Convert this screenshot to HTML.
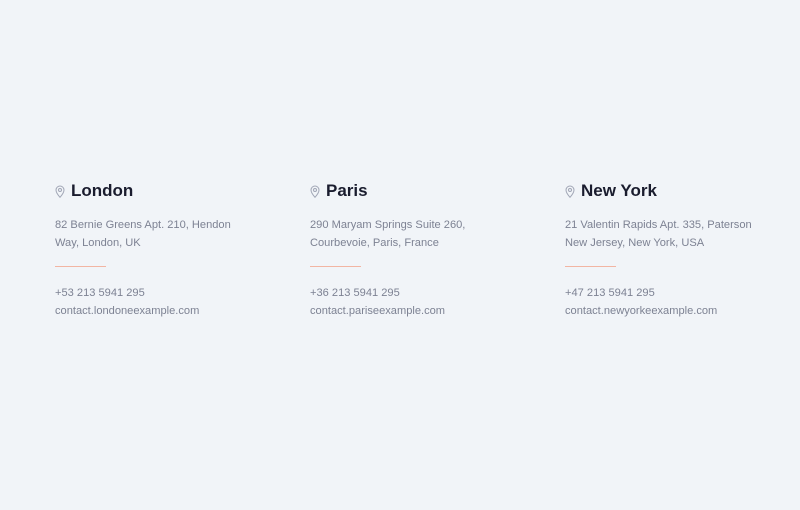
<!DOCTYPE html>
<html><head><style>
body{margin:0;width:800px;height:510px;background:#f1f4f8;font-family:"Liberation Sans",sans-serif;position:relative;overflow:hidden}
.c{position:absolute;top:179px;width:230px}
h3{margin:0;font-size:17px;font-weight:bold;color:#1a1c2e;height:24px;line-height:24px;display:flex;align-items:center}
h3 svg{margin-right:6px}
p{margin:0;font-size:11.1px;line-height:18px;color:#7d8293}
.a{margin-top:13px}
.l{width:51px;height:1px;background:#f2b5a3;margin:14px 0 17px}
</style></head><body>
<div class="c" style="left:55px"><h3><svg width="10" height="13" viewBox="0 0 10 13"><path d="M5 12.3C2.5 9.5 1 7.3 1 5a4 4 0 0 1 8 0c0 2.3-1.5 4.5-4 7.3z" fill="none" stroke="#a0a5b5" stroke-width="1"/><circle cx="5" cy="5" r="1.5" fill="none" stroke="#a0a5b5"/></svg>London</h3>
<p class="a">82 Bernie Greens Apt. 210, Hendon<br>Way, London, UK</p><div class="l"></div><p>+53 213 5941 295<br>contact.londoneexample.com</p></div>
<div class="c" style="left:310px"><h3><svg width="10" height="13" viewBox="0 0 10 13"><path d="M5 12.3C2.5 9.5 1 7.3 1 5a4 4 0 0 1 8 0c0 2.3-1.5 4.5-4 7.3z" fill="none" stroke="#a0a5b5" stroke-width="1"/><circle cx="5" cy="5" r="1.5" fill="none" stroke="#a0a5b5"/></svg>Paris</h3>
<p class="a">290 Maryam Springs Suite 260,<br>Courbevoie, Paris, France</p><div class="l"></div><p>+36 213 5941 295<br>contact.pariseexample.com</p></div>
<div class="c" style="left:565px"><h3><svg width="10" height="13" viewBox="0 0 10 13"><path d="M5 12.3C2.5 9.5 1 7.3 1 5a4 4 0 0 1 8 0c0 2.3-1.5 4.5-4 7.3z" fill="none" stroke="#a0a5b5" stroke-width="1"/><circle cx="5" cy="5" r="1.5" fill="none" stroke="#a0a5b5"/></svg>New York</h3>
<p class="a">21 Valentin Rapids Apt. 335, Paterson<br>New Jersey, New York, USA</p><div class="l"></div><p>+47 213 5941 295<br>contact.newyorkeexample.com</p></div>
</body></html>
